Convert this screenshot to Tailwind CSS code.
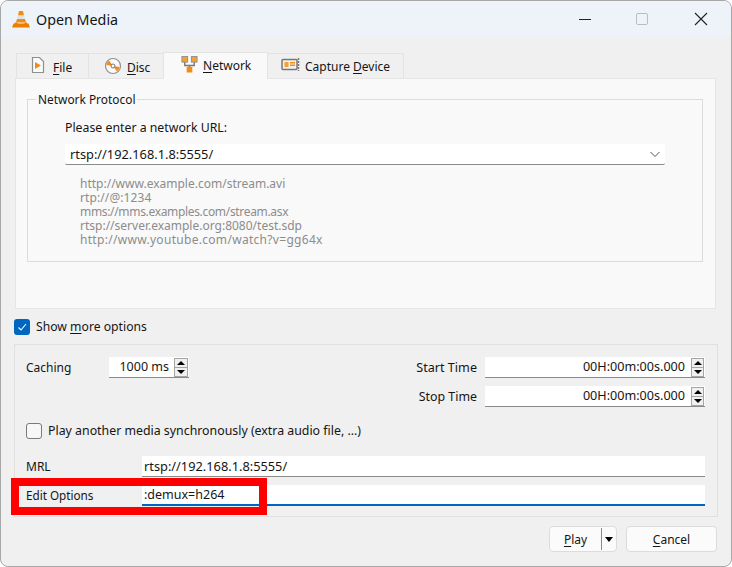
<!DOCTYPE html>
<html lang="en">
<head>
  <meta charset="UTF-8" />
  <title>Open Media</title>
  <script src="https://cdn.jsdelivr.net/npm/@tailwindcss/browser@4"></script>
</head>
<body class="bg-white">
  <div class="relative w-[732px] h-[567px] overflow-hidden flex flex-col border border-[#a8a8a8] rounded-[8px] bg-[#f0f0f0] font-['Noto_Sans'] text-[12px] leading-[16px] text-[#151515]">

    <!-- Title bar -->
    <div class="h-[36px] shrink-0 flex items-center bg-[#edf3f9] pl-[10px]">
      <svg width="20" height="20" viewBox="0 0 20 20">
        <path d="M8 2h4l1 4.500H7z" fill="#f28c13"/>
        <path d="M7 6.500h6l1 3.500H6z" fill="#e2e2e2"/>
        <path d="M6 10h8l1.200 3.500H4.800z" fill="#f28c13"/>
        <path d="M4.800 13l-1 1.500H2.500L1 18.500h18l-1.500-4h-1.300l-1-1.500c-.3 2-9.900 2-10.400 0z" fill="#ef7d00"/>
      </svg>
      <span class="ml-[5px] mt-[1px] text-[14.3px]">Open Media</span>
      <div class="ml-auto flex items-center">
        <svg width="14" height="14" viewBox="0 0 14 14" class="mr-[44px]"><path d="M1 7.500h12" stroke="#222" stroke-width="1"/></svg>
        <div class="w-[12px] h-[12px] border border-[#bdbdbd] rounded-[2px] mr-[46px]"></div>
        <svg width="14" height="14" viewBox="0 0 14 14" class="mr-[23px]"><path d="M1 1l12 12M13 1L1 13" stroke="#222" stroke-width="1.100"/></svg>
      </div>
    </div>

    <!-- Tabs -->
    <div class="h-[42px] shrink-0 flex items-end pl-[15px] relative z-10 -mb-px">
      <div class="h-[25px] w-[72px] flex items-center pl-[13px] gap-[7px] border border-[#e3e3e3] border-r-0 border-b-0 mb-px bg-[#f0f0f0]">
        <svg width="16" height="18" viewBox="0 0 16 18" class="mt-[-2px]">
          <path d="M2.500 1.500h7l4 4v11h-11z" fill="#fafafa" stroke="#8f8f8f" stroke-width="1.200"/>
          <path d="M5 6l6 3.500L5 13z" fill="#f28c13"/>
        </svg>
        <span class="mt-[3px]"><span class="underline underline-offset-2">F</span>ile</span>
      </div>
      <div class="h-[25px] w-[75px] flex items-center pl-[15px] gap-[5px] border border-[#e3e3e3] border-r-0 border-b-0 mb-px bg-[#f0f0f0]">
        <svg width="18" height="18" viewBox="0 0 18 18" class="mt-[-1px]">
          <circle cx="9" cy="9" r="7.500" fill="#fafafa" stroke="#8f8f8f" stroke-width="1.200"/>
          <path d="M9 9L5 3.500A7 7 0 0 0 2.500 8z" fill="#f28c13"/>
          <path d="M9 9l4 5.500A7 7 0 0 0 15.500 10z" fill="#f28c13"/>
          <circle cx="9" cy="9" r="2" fill="#fafafa" stroke="#777" stroke-width="1"/>
        </svg>
        <span class="mt-[3px]"><span class="underline underline-offset-2">D</span>isc</span>
      </div>
      <div class="h-[27px] w-[105px] flex items-start pl-[17px] gap-[5px] pt-[2px] border border-[#e3e3e3] border-b-0 bg-[#f9f9f9]">
        <svg width="17" height="18" viewBox="0 0 18 18">
          <path d="M4 7v3.500h10V7M9 10v3" fill="none" stroke="#777" stroke-width="1.500"/>
          <rect x="1" y="1" width="6" height="6" fill="#f5a030" stroke="#8f8f8f"/>
          <rect x="11" y="1" width="6" height="6" fill="#f5a030" stroke="#8f8f8f"/>
          <rect x="6" y="12" width="6" height="6" fill="#f28c13"/>
        </svg>
        <span class="mt-[3px]"><span class="underline underline-offset-2">N</span>etwork</span>
      </div>
      <div class="h-[25px] w-[136px] flex items-center pl-[13px] gap-[5px] border border-[#e3e3e3] border-l-0 border-b-0 mb-px bg-[#f0f0f0]">
        <svg width="19" height="16" viewBox="0 0 19 16" class="mt-[-2px]">
          <rect x="1" y="2.500" width="15" height="10" rx="1" fill="#f0f0f0" stroke="#777" stroke-width="1.500"/>
          <rect x="3.500" y="5" width="4" height="5" fill="#f5a030"/>
          <path d="M9 5h5v1.500H9zM9 7.500h5V9H9z" fill="#f28c13"/>
          <path d="M17.500 1v13" stroke="#777" stroke-width="1.500" stroke-dasharray="2 1"/>
        </svg>
        <span class="mt-[1px] whitespace-nowrap">Capture <span class="underline underline-offset-2">D</span>evice</span>
      </div>
    </div>

    <!-- Network pane -->
    <div class="ml-[14px] w-[701px] h-[231px] shrink-0 border border-[#e5e5e5] bg-[#f9f9f9] pt-[12px] pl-[11px]">
      <fieldset class="w-[676px] h-[171px] border border-[#dcdcdc]">
        <legend class="ml-[8px] px-[2px] text-[11.9px]">Network Protocol</legend>
        <div class="pl-[37px] pt-[13px]">
          <div class="text-[12.3px]">Please enter a network URL:</div>
          <div class="mt-[8px] w-[600px] h-[21px] bg-white border-b border-[#8a8a8a] rounded-[2px] flex items-center justify-between pl-[5px] pr-[4px]">
            <span class="text-[12.8px]">rtsp://192.168.1.8:5555/</span>
            <svg width="12" height="12" viewBox="0 0 12 12"><path d="M1.500 4l4.500 4.500L10.500 4" fill="none" stroke="#555" stroke-width="1"/></svg>
          </div>
          <div class="mt-[12px] pl-[15px] leading-[14px] text-[#8c8c8c]">
            <div>http://www.example.com/stream.avi</div>
            <div class="tracking-[0.1px]">rtp://@:1234</div>
            <div class="tracking-[-0.33px]">mms://mms.examples.com/stream.asx</div>
            <div>rtsp://server.example.org:8080/test.sdp</div>
            <div class="tracking-[0.3px]">http://www.youtube.com/watch?v=gg64x</div>
          </div>
        </div>
      </fieldset>
    </div>

    <!-- Show more options -->
    <div class="mt-[10px] ml-[13px] h-[16px] shrink-0 flex items-center gap-[6px]">
      <div class="w-[16px] h-[16px] rounded-[3px] bg-[#0067c0] flex items-center justify-center">
        <svg width="10" height="10" viewBox="0 0 10 10"><path d="M1.500 5.500l2.500 2.500 5-6" fill="none" stroke="#fff" stroke-width="1.100"/></svg>
      </div>
      <span class="text-[12.2px]">Show <span class="underline underline-offset-2">m</span>ore options</span>
    </div>

    <!-- Options panel -->
    <div class="mt-[9px] ml-[13px] w-[704px] h-[173px] shrink-0 border border-[#e0e0e0] pl-[11px] pr-[12px] pt-[12px]">
      <div class="flex justify-between">
        <div class="flex items-center h-[21px]">
          <span class="w-[83px]">Caching</span>
          <div class="w-[80px] h-[21px] bg-white border-b border-[#8a8a8a] flex items-center justify-end pr-[1px]">
            <span class="mr-[5px] text-[12.5px]">1000 ms</span>
            <div class="flex flex-col">
              <div class="w-[14px] h-[10px] border border-[#a5a5a5] bg-[#f0f0f0] flex items-center justify-center"><div class="w-0 h-0 border-x-[4px] border-x-transparent border-b-[4px] border-b-black"></div></div>
              <div class="w-[14px] h-[9px] border border-t-0 border-[#a5a5a5] bg-[#f0f0f0] flex items-center justify-center"><div class="w-0 h-0 border-x-[4px] border-x-transparent border-t-[4px] border-t-black"></div></div>
            </div>
          </div>
        </div>
        <div class="flex flex-col gap-[8px]">
          <div class="flex items-center justify-end h-[21px]">
            <span class="mr-[8px] text-[12.6px]">Start Time</span>
            <div class="w-[220px] h-[21px] bg-white border-b border-[#8a8a8a] flex items-center justify-end pr-[1px]">
              <span class="mr-[6px] text-[12.6px]">00H:00m:00s.000</span>
              <div class="flex flex-col">
                <div class="w-[13px] h-[10px] border border-[#a5a5a5] bg-[#f0f0f0] flex items-center justify-center"><div class="w-0 h-0 border-x-[4px] border-x-transparent border-b-[4px] border-b-black"></div></div>
                <div class="w-[13px] h-[9px] border border-t-0 border-[#a5a5a5] bg-[#f0f0f0] flex items-center justify-center"><div class="w-0 h-0 border-x-[4px] border-x-transparent border-t-[4px] border-t-black"></div></div>
              </div>
            </div>
          </div>
          <div class="flex items-center justify-end h-[21px]">
            <span class="mr-[8px] text-[12.4px]">Stop Time</span>
            <div class="w-[220px] h-[21px] bg-white border-b border-[#8a8a8a] flex items-center justify-end pr-[1px]">
              <span class="mr-[6px] text-[12.6px]">00H:00m:00s.000</span>
              <div class="flex flex-col">
                <div class="w-[13px] h-[10px] border border-[#a5a5a5] bg-[#f0f0f0] flex items-center justify-center"><div class="w-0 h-0 border-x-[4px] border-x-transparent border-b-[4px] border-b-black"></div></div>
                <div class="w-[13px] h-[9px] border border-t-0 border-[#a5a5a5] bg-[#f0f0f0] flex items-center justify-center"><div class="w-0 h-0 border-x-[4px] border-x-transparent border-t-[4px] border-t-black"></div></div>
              </div>
            </div>
          </div>
        </div>
      </div>

      <div class="mt-[16px] flex items-center gap-[6px] h-[16px]">
        <div class="w-[16px] h-[16px] rounded-[3px] border border-[#7a7a7a] bg-[#f7f7f7]"></div>
        <span class="text-[12.35px]">Play another media synchronously (extra audio file, ...)</span>
      </div>

      <div class="mt-[17px] flex items-center h-[21px]">
        <span class="w-[116px]">MRL</span>
        <div class="w-[563px] h-[21px] bg-white border-b border-[#8a8a8a] flex items-center pl-[2px] text-[12.8px]">rtsp://192.168.1.8:5555/</div>
      </div>
      <div class="mt-[8px] flex items-center h-[21px]">
        <span class="w-[116px] text-[11.7px] mt-[-2px]">Edit Options</span>
        <div class="w-[563px] h-[21px] bg-white border-b-2 border-[#0067c0] flex items-center pl-[2px] text-[12.5px]">:demux=h264</div>
      </div>
    </div>

    <!-- Buttons -->
    <div class="mt-[9px] ml-[548px] flex gap-[9px]">
      <div class="w-[68px] h-[26px] bg-[#fbfbfb] border border-[#dcdcdc] rounded-[4px] flex items-center">
        <span class="w-[51px] text-center mt-[2px]"><span class="underline underline-offset-2">P</span>lay</span>
        <div class="w-px h-[22px] bg-[#8a8a8a]"></div>
        <div class="ml-[3px] w-0 h-0 border-x-[4px] border-x-transparent border-t-[5px] border-t-black"></div>
      </div>
      <div class="w-[91px] h-[26px] bg-[#fbfbfb] border border-[#dcdcdc] rounded-[4px] flex items-center justify-center">
        <span class="mt-[2px]"><span class="underline underline-offset-2">C</span>ancel</span>
      </div>
    </div>

    <!-- Red highlight drawn over the screenshot -->
    <div class="absolute left-[10px] top-[477px] w-[256px] h-[37px] border-[8px] border-[#ff0000]"></div>
  </div>
</body>
</html>
